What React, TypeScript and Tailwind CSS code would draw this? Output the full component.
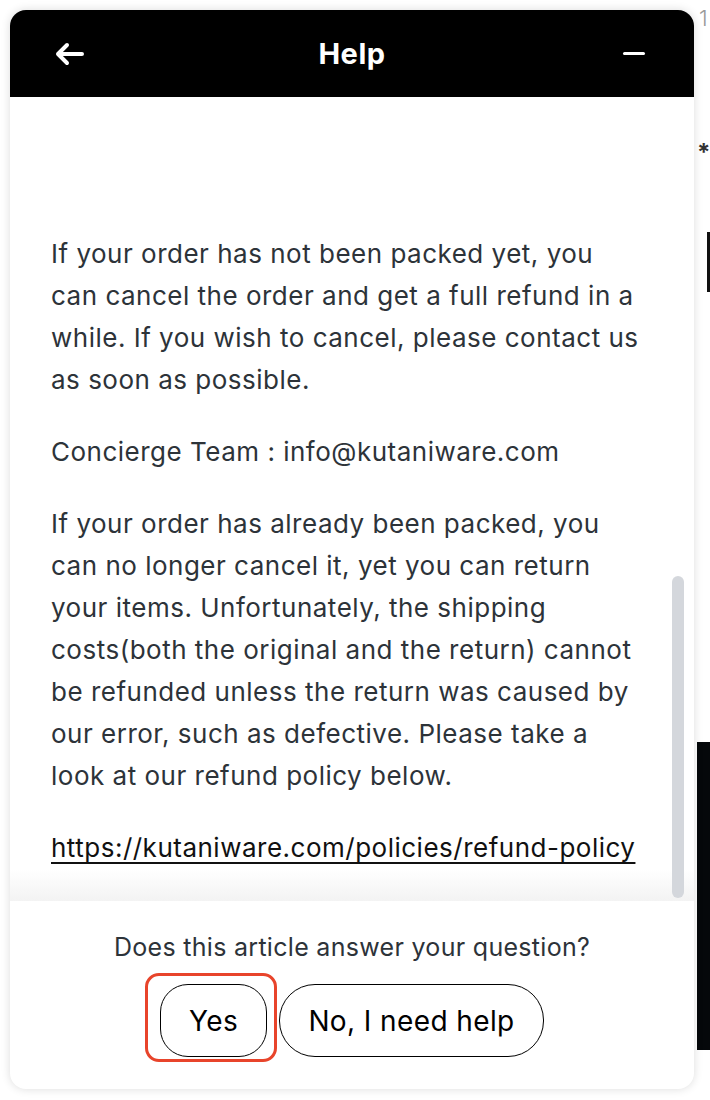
import React from "react";

const font = { fontFamily: "Inter, 'Noto Sans', sans-serif" };

export default function App() {
  return (
    <div className="relative w-[710px] h-[1100px] bg-white overflow-hidden" style={font}>
      {/* page behind the widget */}
      <div className="absolute left-[699px] top-[4px] text-[22px] leading-[28px] text-[#9a9a9a] font-light">1</div>
      <div className="absolute left-[697px] top-[138px] text-[24px] leading-[30px] font-bold text-[#333]">*</div>
      <div className="absolute left-[707px] top-[232px] w-[3px] h-[60px] bg-[#111]" />
      <div className="absolute left-[697px] top-[742px] w-[13px] h-[308px] bg-[#05080a]" />

      {/* widget */}
      <div className="absolute left-[10px] top-[10px] w-[684px] h-[1079px] rounded-[16px] bg-white shadow-[0_0_10px_rgba(0,0,0,0.14)] overflow-hidden flex flex-col">
        <div className="h-[87px] shrink-0 bg-black flex items-center justify-between px-[45px]">
          <svg width="30" height="24" viewBox="0 0 30 24" fill="none" stroke="white" strokeWidth="4" strokeLinecap="round" strokeLinejoin="round">
            <path d="M27 12H3M12 3L3 12L12 21" />
          </svg>
          <div className="text-white text-[29px] font-bold leading-none tracking-[0.5px]">Help</div>
          <div className="w-[30px] flex justify-end pr-[4px]">
            <div className="w-[22px] h-[3px] rounded-full bg-white" />
          </div>
        </div>

        <div className="relative h-[804px] shrink-0 overflow-hidden">
          <div className="pl-[41px] pt-[136px] text-[26px] leading-[42px] tracking-[0.5px] text-[#2d3339] whitespace-nowrap">
            <p>
              If your order has not been packed yet, you<br />
              can cancel the order and get a full refund in a<br />
              while. If you wish to cancel, please contact us<br />
              as soon as possible.
            </p>
            <p className="mt-[30px]">Concierge Team : info@kutaniware.com</p>
            <p className="mt-[30px]">
              If your order has already been packed, you<br />
              can no longer cancel it, yet you can return<br />
              your items. Unfortunately, the shipping<br />
              costs(both the original and the return) cannot<br />
              be refunded unless the return was caused by<br />
              our error, such as defective. Please take a<br />
              look at our refund policy below.
            </p>
            <p className="mt-[30px]">
              <span className="text-[#111] underline underline-offset-[5px] decoration-[2px]">https://kutaniware.com/policies/refund-policy</span>
            </p>
          </div>
          <div className="absolute left-0 right-0 bottom-0 h-[32px] bg-gradient-to-b from-[rgba(243,243,243,0)] to-[#f3f3f3]" />
          <div className="absolute left-[662px] top-[479px] w-[12px] h-[322px] rounded-full bg-[#d4d7dc]" />
        </div>

        <div className="flex-1 flex flex-col items-center pt-[32px]">
          <div className="text-[25px] leading-[28px] tracking-[0.3px] text-[#2d3339]">Does this article answer your question?</div>
          <div className="mt-[23px] flex gap-[12px]">
            <div className="relative">
              <div className="absolute left-[-15px] top-[-11px] w-[132px] h-[89px] rounded-[14px] border-[3px] border-[#e8442b]" />
              <button className="relative w-[107px] h-[73px] rounded-[28px] border-[1.5px] border-black bg-white text-[28px] tracking-[0.4px] text-black">Yes</button>
            </div>
            <button className="w-[265px] h-[73px] rounded-[36px] border-[1.5px] border-black bg-white text-[28px] tracking-[0.4px] text-black">No, I need help</button>
          </div>
        </div>
      </div>
    </div>
  );
}
